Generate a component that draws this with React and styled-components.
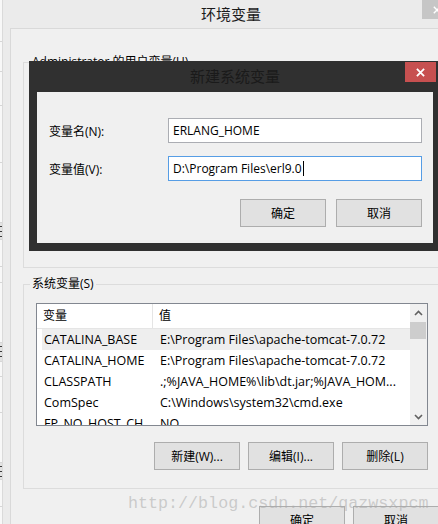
import React from 'react';
import styled, { createGlobalStyle } from 'styled-components';

const UI_FONT = `"Open Sans", "Noto Sans CJK SC", sans-serif`;

const stripSegments = [
  { h: 42 }, { h: 30 }, { h: 34 }, { h: 57 }, { h: 60 },
  { h: 17, tab: true }, { h: 27 }, { h: 16 }, { h: 60 },
  { h: 19, tab: true }, { h: 15 }, { h: 36 }, { h: 50 },
  { h: 17, tab: true }, { h: 27 },
];

const systemVars = [
  { name: 'CATALINA_BASE', value: 'E:\\Program Files\\apache-tomcat-7.0.72', selected: true },
  { name: 'CATALINA_HOME', value: 'E:\\Program Files\\apache-tomcat-7.0.72' },
  { name: 'CLASSPATH', value: '.;%JAVA_HOME%\\lib\\dt.jar;%JAVA_HOM...' },
  { name: 'ComSpec', value: 'C:\\Windows\\system32\\cmd.exe' },
  { name: 'FP_NO_HOST_CH...', value: 'NO' },
];

const Chevron = ({ down }) => (
  <svg width="9" height="6" viewBox="0 0 9 6">
    <polyline
      points={down ? '1,1 4.5,4.5 8,1' : '1,5 4.5,1.5 8,5'}
      fill="none"
      stroke="#606060"
      strokeWidth="1.6"
    />
  </svg>
);

const CrossIcon = ({ size = 9, weight = 2 }) => (
  <svg width={size} height={size} viewBox="0 0 10 10">
    <path d="M1 1 L9 9 M9 1 L1 9" stroke="#fff" strokeWidth={weight} fill="none" />
  </svg>
);

const App = () => {
  return (
    <>
      <GlobalStyle />
      <Screen>
        <BackStrip>
          {stripSegments.map((s, i) => (
            <StripSegment key={i} $h={s.h} $tab={s.tab} />
          ))}
        </BackStrip>

        <Window>
          <TitleBar>
            <span />
            <WindowTitle>环境变量</WindowTitle>
            <CaptionClose>
              <CrossIcon size={8} weight={1.8} />
            </CaptionClose>
          </TitleBar>

          <Client>
            <GroupBox $pad="0 10px 0 12px">
              <GroupLabel>Administrator 的用户变量(U)</GroupLabel>
              <GroupFiller $h={197} />
            </GroupBox>

            <GroupBox $gap={8} $pad="11px 10px 18px 12px">
              <GroupLabel>系统变量(S)</GroupLabel>
              <ListView>
                <ListBody>
                  <ListHeader>
                    <HeaderCell $w={116}>变量</HeaderCell>
                    <HeaderCell>值</HeaderCell>
                  </ListHeader>
                  <ListRows>
                    {systemVars.map((v) => (
                      <ListRow key={v.name} $selected={v.selected}>
                        <NameCell>{v.name}</NameCell>
                        <ValueCell>{v.value}</ValueCell>
                      </ListRow>
                    ))}
                  </ListRows>
                </ListBody>
                <ScrollBar>
                  <ScrollArrow>
                    <Chevron />
                  </ScrollArrow>
                  <ScrollThumb />
                  <ScrollTrack />
                  <ScrollArrow>
                    <Chevron down />
                  </ScrollArrow>
                </ScrollBar>
              </ListView>
              <ButtonRow $gap={8} $top={16}>
                <WinButton>新建(W)...</WinButton>
                <WinButton>编辑(I)...</WinButton>
                <WinButton>删除(L)</WinButton>
              </ButtonRow>
            </GroupBox>

            <ButtonRow $gap={8} $top={17}>
              <WinButton>确定</WinButton>
              <WinButton>取消</WinButton>
            </ButtonRow>
          </Client>
        </Window>

        <Modal>
          <ModalTitleBar>
            <span />
            <ModalTitle>新建系统变量</ModalTitle>
            <ModalClose>
              <CrossIcon size={9} weight={2} />
            </ModalClose>
          </ModalTitleBar>
          <ModalClient>
            <FieldGrid>
              <FieldLabel>变量名(N):</FieldLabel>
              <FieldBox>ERLANG_HOME</FieldBox>
              <FieldLabel>变量值(V):</FieldLabel>
              <FieldBox $focused>
                D:\Program Files\erl9.0
                <Caret />
              </FieldBox>
            </FieldGrid>
            <ButtonRow $gap={10} $top={18}>
              <WinButton>确定</WinButton>
              <WinButton>取消</WinButton>
            </ButtonRow>
          </ModalClient>
        </Modal>

        <Watermark>http://blog.csdn.net/qazwsxpcm</Watermark>
      </Screen>
    </>
  );
};

export default App;

const GlobalStyle = createGlobalStyle`
  html, body {
    margin: 0;
    padding: 0;
    background: #f0f0f0;
  }
  body {
    font-family: ${UI_FONT};
    font-size: 12px;
    color: #000;
  }
  * {
    box-sizing: border-box;
  }
`;

const Screen = styled.div`
  position: relative;
  display: flex;
  width: 438px;
  height: 524px;
  overflow: hidden;
`;

const BackStrip = styled.div`
  flex: 0 0 3px;
  display: flex;
  flex-direction: column;
  background: #f8f8f8;
  border-right: 1px solid #dadada;
  overflow: hidden;
`;
/* the window behind only shows a sliver of its tabs: draw the glyph fragments as ticks */
const StripSegment = styled.div`
  flex: 0 0 ${({ $h }) => $h}px;
  border-bottom: 1px solid #d6d6d6;
  background: ${({ $tab }) =>
    $tab
      ? 'repeating-linear-gradient(to bottom, #e2e2e2 0 3px, #3a3a3a 3px 4px, #e2e2e2 4px 5px)'
      : 'transparent'};
`;

const Window = styled.div`
  flex: 0 0 456px;
  display: flex;
  flex-direction: column;
  background: #ebebeb;
  padding: 0 7px;
`;
const TitleBar = styled.div`
  height: 28px;
  display: grid;
  grid-template-columns: 1fr auto 1fr;
  align-items: start;
`;
const WindowTitle = styled.div`
  font-size: 15px;
  line-height: 28px;
  color: #1b1b1b;
`;
const CaptionClose = styled.div`
  justify-self: end;
  width: 30px;
  height: 19px;
  background: #c6c6c6;
  display: flex;
  align-items: center;
  justify-content: center;
`;

const Client = styled.div`
  flex: 1;
  background: #f0f0f0;
  border: 1px solid #d9d9d9;
  border-bottom: none;
  padding: 25px 12px 0;
`;

const GroupBox = styled.fieldset`
  margin: ${({ $gap }) => $gap || 0}px 0 0;
  padding: ${({ $pad }) => $pad};
  border: 1px solid #dcdcdc;
  min-width: 0;
`;
const GroupLabel = styled.legend`
  margin-left: -6px;
  padding: 0 2px;
  font-size: 12px;
  line-height: 16px;
  white-space: nowrap;
`;
const GroupFiller = styled.div`
  height: ${({ $h }) => $h}px;
`;

const ListView = styled.div`
  display: flex;
  height: 123px;
  border: 1px solid #828790;
  background: #fff;
`;
const ListBody = styled.div`
  flex: 1;
  min-width: 0;
  display: flex;
  flex-direction: column;
  overflow: hidden;
`;
const ListHeader = styled.div`
  flex: 0 0 25px;
  display: flex;
  border-bottom: 1px solid #e5e5e5;
`;
const HeaderCell = styled.div`
  ${({ $w }) => ($w ? `flex: 0 0 ${$w}px; border-right: 1px solid #e5e5e5;` : 'flex: 1;')}
  padding-left: 6px;
  line-height: 24px;
  font-size: 12px;
`;
const ListRows = styled.div`
  padding-left: 5px;
`;
const ListRow = styled.div`
  display: flex;
  height: 21px;
  line-height: 21px;
  font-size: 12.5px;
  background: ${({ $selected }) => ($selected ? '#eeeeee' : 'transparent')};
`;
const NameCell = styled.div`
  flex: 0 0 118px;
  padding-left: 2px;
  white-space: nowrap;
  overflow: hidden;
`;
const ValueCell = styled.div`
  flex: 1;
  white-space: nowrap;
  overflow: hidden;
`;

const ScrollBar = styled.div`
  flex: 0 0 17px;
  display: flex;
  flex-direction: column;
  background: #f0f0f0;
`;
const ScrollArrow = styled.div`
  flex: 0 0 17px;
  display: flex;
  align-items: center;
  justify-content: center;
`;
const ScrollThumb = styled.div`
  flex: 0 0 17px;
  margin: 1px 1px 0 0;
  background: #cdcdcd;
`;
const ScrollTrack = styled.div`
  flex: 1;
`;

const ButtonRow = styled.div`
  display: flex;
  justify-content: flex-end;
  gap: ${({ $gap }) => $gap}px;
  margin-top: ${({ $top }) => $top}px;
`;
const WinButton = styled.div`
  width: 86px;
  height: 28px;
  border: 1px solid #adadad;
  background: #e1e1e1;
  display: flex;
  align-items: center;
  justify-content: center;
  font-size: 12px;
`;

const Modal = styled.div`
  position: absolute;
  left: 29px;
  top: 61px;
  width: 412px;
  background: #303030;
  padding: 0 8px 8px;
  display: flex;
  flex-direction: column;
`;
const ModalTitleBar = styled.div`
  height: 31px;
  display: grid;
  grid-template-columns: 1fr auto 1fr;
  align-items: start;
`;
const ModalTitle = styled.div`
  font-size: 15px;
  line-height: 31px;
  color: #1a1a1a;
`;
const ModalClose = styled.div`
  justify-self: end;
  width: 31px;
  height: 20px;
  margin: 1px -3px 0 0;
  background: #c75050;
  display: flex;
  align-items: center;
  justify-content: center;
`;
const ModalClient = styled.div`
  background: #f0f0f0;
  padding: 26px 11px 16px 12px;
`;
const FieldGrid = styled.div`
  display: grid;
  grid-template-columns: 119px 1fr;
  row-gap: 13px;
  align-items: center;
`;
const FieldLabel = styled.div`
  font-size: 12px;
`;
const FieldBox = styled.div`
  height: 25px;
  border: 1px solid ${({ $focused }) => ($focused ? '#569de5' : '#abadb3')};
  background: #fff;
  padding: 0 4px;
  display: flex;
  align-items: center;
  font-size: 12px;
  white-space: nowrap;
`;
const Caret = styled.span`
  display: inline-block;
  width: 1px;
  height: 15px;
  margin-left: 1px;
  background: #000;
`;

const Watermark = styled.div`
  position: absolute;
  left: 128px;
  top: 495px;
  font-family: "Liberation Mono", monospace;
  font-size: 16.7px;
  line-height: 18px;
  color: rgba(170, 170, 170, 0.55);
  white-space: nowrap;
  pointer-events: none;
`;
